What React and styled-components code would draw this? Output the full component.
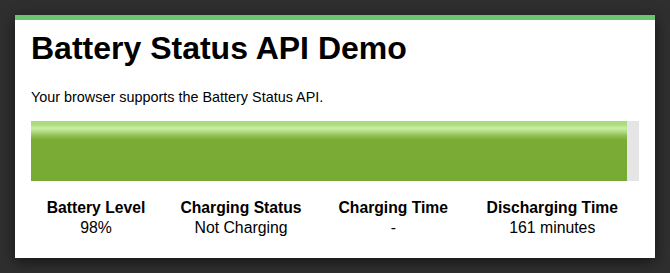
import React from "react";
import styled, { createGlobalStyle } from "styled-components";

const Global = createGlobalStyle`
  html, body { margin: 0; padding: 0; }
  body {
    background: #2f2f2f;
    font-family: "Liberation Sans", Arial, Helvetica, sans-serif;
    color: #000;
  }
`;

const Page = styled.div`
  padding: 15px;
  width: 640px;
`;

const Card = styled.section`
  background: #fff;
  border-top: 5px solid #6cc46f;
  padding: 10px 16px 20px;
  box-shadow: 0 4px 14px rgba(0, 0, 0, 0.55);
`;

const Title = styled.h1`
  margin: 0;
  font-size: 32px;
  line-height: 37px;
  font-weight: bold;
`;

const Note = styled.p`
  margin: 21px 0 0;
  font-size: 14.4px;
  line-height: 18px;
`;

const Meter = styled.div`
  margin-top: 15px;
  height: 60px;
  background: #e5e5e5;
  display: flex;
`;

const Fill = styled.div`
  height: 100%;
  background: linear-gradient(
    to bottom,
    #a8da78 0px,
    #afde80 4px,
    #cbeca6 7px,
    #b6e08a 10px,
    #8fbe4e 15px,
    #7aab36 19px,
    #77aa33 60px
  );
`;

const Stats = styled.table`
  width: 100%;
  border-collapse: collapse;
  margin-top: 17px;
`;

const Label = styled.th`
  padding: 0;
  font-size: 15.7px;
  line-height: 20px;
  font-weight: bold;
  text-align: center;
`;

const Value = styled.td`
  padding: 0;
  font-size: 15.8px;
  line-height: 20px;
  text-align: center;
`;

const stats = [
  ["Battery Level", "98%"],
  ["Charging Status", "Not Charging"],
  ["Charging Time", "-"],
  ["Discharging Time", "161 minutes"],
];

export default function App() {
  const level = 0.98;
  return (
    <Page>
      <Global />
      <Card>
        <Title>Battery Status API Demo</Title>
        <Note>Your browser supports the Battery Status API.</Note>
        <Meter>
          <Fill style={{ width: `${level * 100}%` }} />
        </Meter>
        <Stats>
          <tbody>
            <tr>
              {stats.map(([l]) => (
                <Label key={l}>{l}</Label>
              ))}
            </tr>
            <tr>
              {stats.map(([l, v]) => (
                <Value key={l}>{v}</Value>
              ))}
            </tr>
          </tbody>
        </Stats>
      </Card>
    </Page>
  );
}
